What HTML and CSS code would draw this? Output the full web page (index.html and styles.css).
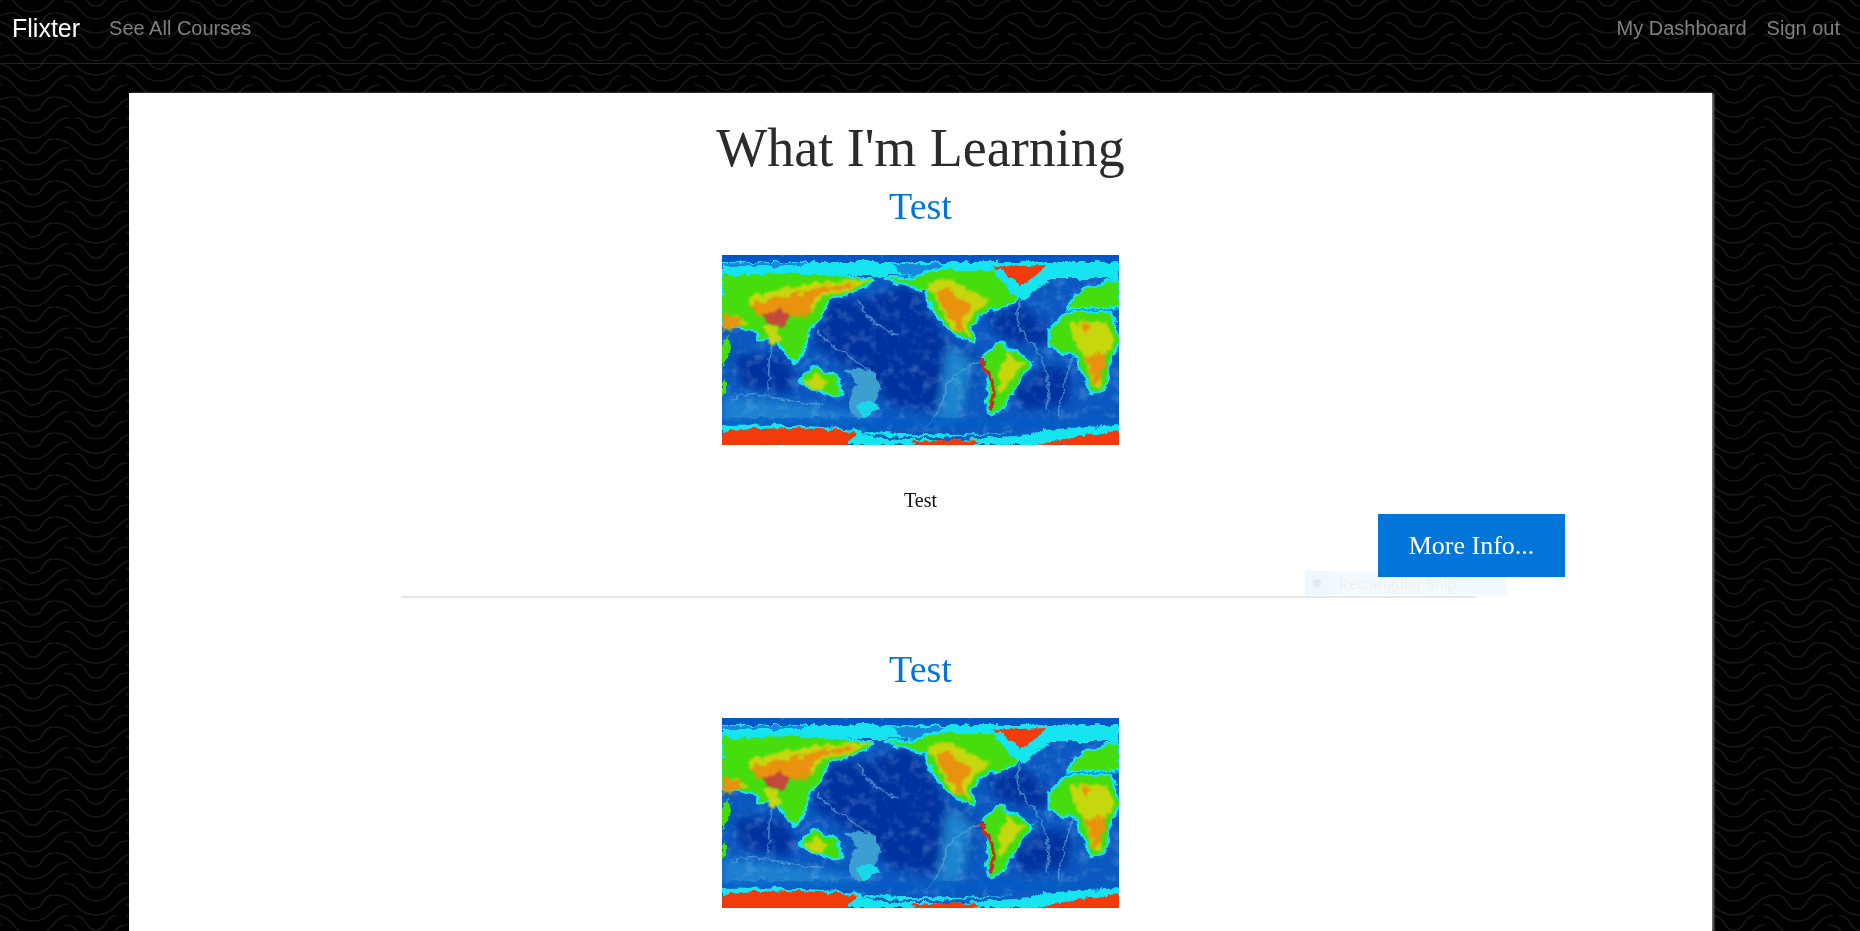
FILE: index.html
```html
<!DOCTYPE html>
<html>
<head>
    <meta charset="utf-8">
    <title>Flixter</title>
    <link rel="stylesheet" href="styles.css">
</head>
<body>
    <nav class="navbar">
        <a class="brand" href="#">Flixter</a>
        <a class="nav_link" href="#">See All Courses</a>
        <div class="nav_right">
            <a class="nav_link" href="#">My Dashboard</a>
            <a class="nav_link" href="#">Sign out</a>
        </div>
    </nav>

    <main class="panel">
        <h1>What I'm Learning</h1>

        <section class="course">
            <h2><a href="#">Test</a></h2>
            <svg class="map" viewBox="0 0 397 190">
                <defs>
                    <filter id="rough" x="-5%" y="-5%" width="110%" height="110%">
                        <feTurbulence type="fractalNoise" baseFrequency="0.11" numOctaves="4" seed="4"/>
                        <feDisplacementMap in="SourceGraphic" scale="8" xChannelSelector="R" yChannelSelector="G"/>
                        <feGaussianBlur stdDeviation="0.6"/>
                    </filter>
                    <filter id="rough_soft" x="-5%" y="-5%" width="110%" height="110%">
                        <feTurbulence type="fractalNoise" baseFrequency="0.13" numOctaves="4" seed="9"/>
                        <feDisplacementMap in="SourceGraphic" scale="11" xChannelSelector="R" yChannelSelector="G"/>
                        <feGaussianBlur stdDeviation="1.2"/>
                    </filter>
                    <filter id="soft" x="-20%" y="-20%" width="140%" height="140%">
                        <feGaussianBlur stdDeviation="5"/>
                    </filter>
                    <filter id="speckle" x="0" y="0" width="100%" height="100%">
                        <feTurbulence type="fractalNoise" baseFrequency="0.09" numOctaves="3" seed="12"/>
                        <feColorMatrix values="0 0 0 0 .55  0 0 0 0 .85  0 0 0 0 1  1.9 0 0 0 -.92"/>
                    </filter>
                    <symbol id="world" viewBox="0 0 397 190">
                        <rect width="397" height="190" fill="#0a58c0"/>
                        <!-- ocean depth -->
                        <g filter="url(#soft)">
                            <path fill="#05329f" d="M108 45 L150 42 L190 28 L205 50 L225 85 L255 100 L250 130 L235 160 L170 150 L145 125 L110 100 L90 90Z"/>
                            <path fill="#05329f" d="M265 60 L300 50 L325 70 L328 90 L305 90 L275 80Z"/>
                            <path fill="#05329f" d="M290 135 L325 110 L350 115 L345 150 L300 155Z"/>
                            <path fill="#05329f" d="M12 100 L60 100 L75 125 L65 140 L20 130Z"/>
                            <path fill="#1a80d0" d="M0 140 L90 150 L160 166 L0 170Z"/>
                            <path fill="#1d84cf" d="M225 90 L250 105 L240 160 L215 170Z"/>
                        </g>
                        <rect width="397" height="190" filter="url(#speckle)" opacity=".28"/>
                        <g filter="url(#rough)">
                            <g fill="none" stroke="#56a6d6" stroke-width="1.6" opacity=".7">
                                <path d="M300 45 C290 60 295 75 315 95 C325 115 330 130 325 155"/>
                                <path d="M225 130 C235 115 250 110 262 105"/>
                                <path d="M225 130 C220 150 215 160 205 172"/>
                                <path d="M48 85 L46 135"/>
                                <path d="M135 45 C145 70 165 75 175 80"/>
                                <path d="M95 75 C110 95 140 105 155 125"/>
                                <path d="M350 100 L335 160"/>
                                <path d="M10 145 C40 130 60 150 100 150"/>
                            </g>
                            <!-- shelf round New Zealand -->
                            <path fill="#3d9fd0" d="M122 112 L155 118 L158 135 L150 155 L135 165 L126 150 L135 130Z"/>
                            <path fill="#16d8e8" d="M134 150 L150 146 L160 152 L140 164Z"/>
                            <!-- polar bands -->
                            <rect y="0" width="397" height="7" fill="#0258c8"/>
                            <path fill="#12e4ee" d="M0 7 H397 V24 H330 L300 44 L260 25 H210 L195 22 L170 20 H60 L0 20Z"/>
                            <path fill="#1289dc" d="M170 9 H222 L205 22 L180 20Z M0 8 H90 L70 11 H0Z"/>
                            <path fill="#0a5cc4" d="M0 163 H397 V172 H0Z" opacity=".6"/>
                            <path fill="#12e4ee" d="M0 170 C60 168 120 172 160 178 C220 182 300 176 397 170 V190 H0Z"/>
                            <path fill="#0a5cc4" d="M140 178 C190 186 260 182 320 172 L310 180 L240 184 L160 184Z"/>
                            <!-- land coasts -->
                            <g fill="#12e4ee" stroke="#12e4ee" stroke-width="5" stroke-linejoin="round">
                                <path d="M0 20 L70 18 L151 25 L125 38 L106 42 L100 60 L88 72 L80 98 L73 108 L60 92 L52 82 L38 84 L35 76 L21 72 L0 70Z"/>
                                <path d="M165 23 L191 25 L211 15 L271 15 L295 45 L265 55 L246 70 L252 86 L231 78 L211 55 L205 35 L180 28Z"/>
                                <path d="M261 102 L278 88 L308 107 L295 128 L278 155 L268 160 L265 145 L268 122Z"/>
                                <path d="M328 75 L345 58 L388 58 L397 85 L388 102 L381 135 L371 138 L361 118 L355 100 L328 92Z"/>
                                <path d="M345 52 L361 35 L397 25 L397 52 L378 52Z"/>
                                <path d="M78 125 L91 113 L115 122 L118 140 L91 133Z"/>
                            </g>
                            <!-- low land -->
                            <g fill="#44dd10">
                                <path d="M0 20 L70 18 L151 25 L125 38 L106 42 L100 60 L88 72 L80 98 L73 108 L60 92 L52 82 L38 84 L35 76 L21 72 L0 70Z"/>
                                <path d="M165 23 L191 25 L211 15 L271 15 L295 45 L265 55 L246 70 L252 86 L231 78 L211 55 L205 35 L180 28Z"/>
                                <path d="M261 102 L278 88 L308 107 L295 128 L278 155 L268 160 L265 145 L268 122Z"/>
                                <path d="M328 75 L345 58 L388 58 L397 85 L388 102 L381 135 L371 138 L361 118 L355 100 L328 92Z"/>
                                <path d="M345 52 L361 35 L397 25 L397 52 L378 52Z"/>
                                <path d="M78 125 L91 113 L115 122 L118 140 L91 133Z"/>
                                <path d="M0 90 L5 80 L10 95 L0 112Z"/>
                                <path d="M0 128 L4 122 L4 138 L0 140Z"/>
                            </g>
                        </g>
                        <!-- high land -->
                        <g filter="url(#rough_soft)">
                            <g fill="#c6d80e">
                                <path d="M25 42 L90 28 L150 25 L125 36 L98 44 L88 60 L60 55 L40 62Z"/>
                                <path d="M0 62 L15 60 L25 70 L0 78Z"/>
                                <path d="M40 72 L55 72 L60 88 L50 88Z"/>
                                <path d="M205 28 L228 24 L268 45 L245 66 L248 82 L228 72Z"/>
                                <path d="M350 68 L385 66 L392 85 L382 105 L378 132 L370 130 L362 100 L350 85Z"/>
                                <path d="M82 126 L95 120 L105 128 L100 133 L88 132Z"/>
                                <path d="M285 98 L302 108 L290 125 L278 140 L276 120Z"/>
                            </g>
                            <g fill="#e8920f">
                                <path d="M28 50 L75 38 L110 30 L135 30 L95 40 L85 62 L60 60 L35 60Z"/>
                                <path d="M212 34 L228 35 L250 52 L240 68 L242 80 L225 60Z"/>
                                <path d="M364 104 L384 96 L381 120 L372 132Z"/>
                                <path d="M358 68 L372 70 L364 78Z"/>
                                <path d="M0 60 L18 62 L22 72 L0 76Z"/>
                            </g>
                            <!-- peaks -->
                            <path fill="#c44a3a" d="M38 58 L65 55 L65 72 L50 70 L40 64Z"/>
                        </g>
                        <g filter="url(#rough)">
                            <path fill="none" stroke="#c62f22" stroke-width="3.5" d="M258 103 C264 112 270 125 272 135 L268 155"/>
                            <path fill="#f23a0c" d="M271 12 L325 10 L311 22 L298 31 L288 20Z"/>
                            <path fill="#f23a0c" d="M0 177 C40 172 100 172 135 178 L125 191 H-2Z"/>
                            <path fill="#f23a0c" d="M190 187 C220 183 240 183 258 187 L250 191 H195Z"/>
                            <path fill="#f23a0c" d="M312 191 C340 183 370 179 399 177 V191Z"/>
                        </g>
                    </symbol>
                </defs>
                <use href="#world"/>
            </svg>
            <p>Test</p>
            <div class="actions"><a class="btn" href="#">More Info...</a></div>
            <div class="snip"><span class="snip_icon"><span class="snip_dot"></span></span><span class="snip_label">Rectangular Snip</span></div>
            <hr>
        </section>

        <section class="course">
            <h2><a href="#">Test</a></h2>
            <svg class="map" viewBox="0 0 397 190"><use href="#world"/></svg>
        </section>
    </main>
</body>
</html>
```

FILE: styles.css
```css
html, body {
    height: 100%;
    overflow: hidden;
}
body {
    margin: 0;
    background-color: #000;
    background-image: url("data:image/svg+xml,%3Csvg xmlns='http://www.w3.org/2000/svg' width='126' height='42'%3E%3Cdefs%3E%3Cg id='a' fill='none' stroke='%23171717' stroke-width='1.6' stroke-linecap='round'%3E%3Cpath d='M13 27C24 27 22 41 33 41S42 27 53 27'/%3E%3Cpath d='M-2 -6C14 -6 14 11 33 11S52 -6 68 -6'/%3E%3Cpath d='M-2 6C14 6 14 26 33 26S52 6 68 6'/%3E%3Cpath d='M76 6C87 6 85 20 96 20S105 6 116 6'/%3E%3Cpath d='M65 15C80 15 80 33 96 33S112 15 127 15'/%3E%3Cpath d='M55 27C75 27 75 47 96 47S117 27 137 27'/%3E%3C/g%3E%3C/defs%3E%3Cuse href='%23a'/%3E%3Cuse href='%23a' y='42'/%3E%3Cuse href='%23a' y='-42'/%3E%3Cuse href='%23a' x='-126'/%3E%3Cuse href='%23a' x='-126' y='-42'/%3E%3C/svg%3E");
    background-position: 0 70px;
    font-family: "Liberation Serif", serif;
}
a {
    text-decoration: none;
}

.navbar {
    display: flex;
    align-items: center;
    height: 57px;
    padding: 0 20px 6px 12px;
    border-bottom: 1px solid #242424;
    font-family: "Liberation Sans", sans-serif;
}
.brand {
    margin-right: 19px;
    font-size: 25px;
    color: #fff;
}
.nav_link {
    padding: 0 10px;
    font-size: 20px;
    color: #808080;
}
.nav_right {
    display: flex;
    margin-left: auto;
    margin-right: -10px;
}

.panel {
    width: 1583px;
    margin: 29px 0 0 129px;
    padding-top: 20px;
    box-sizing: border-box;
    background: #fff;
    box-shadow: 2px 0 2px #777;
    height: 838px;
    text-align: center;
}
h1 {
    margin: 0;
    font-size: 54px;
    font-weight: 400;
    line-height: 71px;
    color: #292b2c;
}
h2 {
    margin: 0;
    font-size: 38px;
    font-weight: 400;
    line-height: 44px;
}
h2 a {
    color: #0275d8;
}
.course {
    position: relative;
}
.map {
    display: block;
    width: 397px;
    height: 190px;
    margin: 27px auto 0;
}
.course p {
    margin: 43px 0 0;
    font-size: 20px;
    line-height: 24px;
    color: #111;
}
.actions {
    display: flex;
    justify-content: flex-end;
    margin: 2px 147px 0 0;
}
.btn {
    display: block;
    width: 187px;
    height: 63px;
    line-height: 63px;
    background: #0275d8;
    color: #fff;
    font-size: 26px;
}
.course hr {
    width: 1075px;
    height: 2px;
    margin: 19px 0 49px 272px;
    border: 0;
    background: #e6e6e6;
}
.snip {
    position: absolute;
    left: 1176px;
    top: 387px;
    display: flex;
    align-items: center;
    width: 202px;
    height: 24px;
    background: #f3faff;
    mix-blend-mode: multiply;
    font-family: "Open Sans", sans-serif;
    font-size: 15px;
    color: #eeeeee;
    text-align: left;
}
.snip_icon {
    display: flex;
    align-items: center;
    justify-content: center;
    width: 24px;
    height: 24px;
    margin-right: 10px;
    background: #eef6fe;
}
.snip_dot {
    width: 8px;
    height: 8px;
    border-radius: 50%;
    background: #e8e6e6;
}
```
